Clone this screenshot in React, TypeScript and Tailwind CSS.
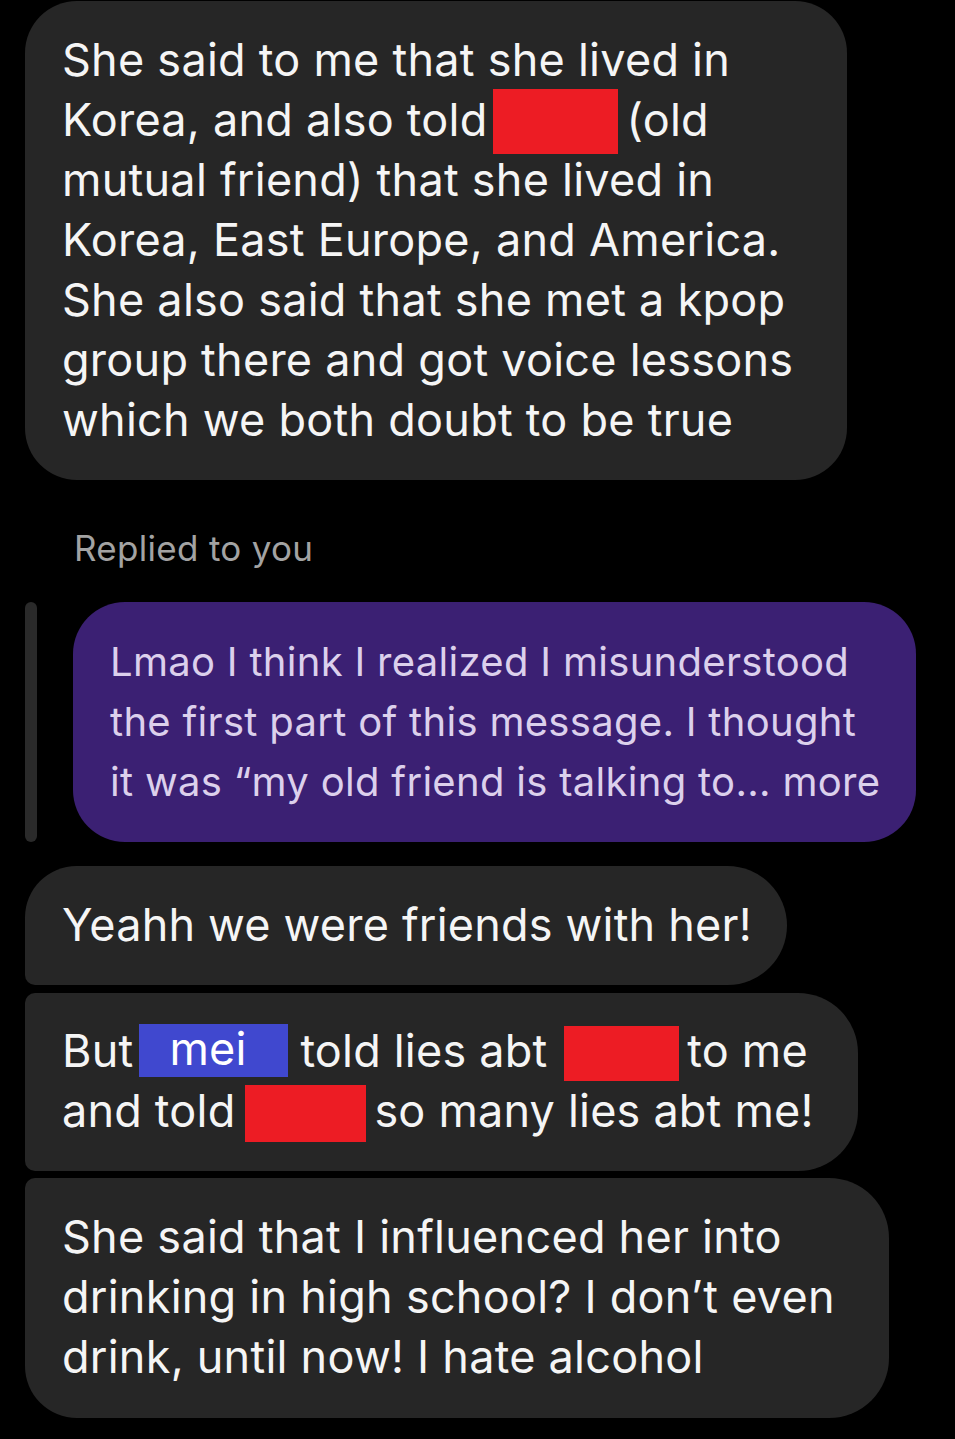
import React from "react";

const font = { fontFamily: "Inter, 'Noto Sans', sans-serif" };

export default function App() {
  return (
    <div
      className="w-[955px] h-[1439px] bg-black overflow-hidden pl-[25px] pt-[1px] text-[#f5f5f5]"
      style={font}
    >
      {/* Bubble 1 */}
      <div className="w-[822px] rounded-[52px] bg-[#262626] pl-[37px] pt-[29px] pb-[30px] text-[45px] leading-[60px] tracking-[0.25px]">
        <div className="h-[60px]">She said to me that she lived in</div>
        <div className="h-[60px] flex items-center whitespace-nowrap">
          <span>Korea, and also told</span>
          <span className="shrink-0 w-[125px] h-[65px] bg-[#ed1c24] ml-[5px] mr-[9px] mt-[2px]" />
          <span>(old</span>
        </div>
        <div className="h-[60px]">mutual friend) that she lived in</div>
        <div className="h-[60px]">Korea, East Europe, and America.</div>
        <div className="h-[60px]">She also said that she met a kpop</div>
        <div className="h-[60px]">group there and got voice lessons</div>
        <div className="h-[60px]">which we both doubt to be true</div>
      </div>

      {/* Replied to you */}
      <div className="pl-[49px] mt-[46px] h-[44px] text-[35px] leading-[44px] text-[#a3a3a3] tracking-[0.3px]">
        Replied to you
      </div>

      {/* Reply row */}
      <div className="flex mt-[32px] h-[240px]">
        <div className="w-[12px] h-full rounded-full bg-[#2a2a2a]" />
        <div className="ml-[36px] w-[843px] h-full rounded-[52px] bg-[#3b2073] pl-[37px] pt-[30px] text-[40px] leading-[60px] text-[#dcd0ec] tracking-[0.3px] whitespace-nowrap">
          <div className="h-[60px]">Lmao I think I realized I misunderstood</div>
          <div className="h-[60px]">the first part of this message. I thought</div>
          <div className="h-[60px]">it was “my old friend is talking to... more</div>
        </div>
      </div>

      {/* Bubble 3 */}
      <div className="mt-[24px] w-[762px] h-[119px] bg-[#262626] rounded-tl-[52px] rounded-bl-[10px] rounded-r-[60px] pl-[37px] pt-[29px] text-[45px] leading-[60px] tracking-[0.2px]">
        Yeahh we were friends with her!
      </div>

      {/* Bubble 4 */}
      <div className="mt-[8px] w-[833px] h-[178px] bg-[#262626] rounded-l-[10px] rounded-r-[60px] pl-[37px] pt-[28px] text-[45px] leading-[60px] tracking-[0.2px]">
        <div className="h-[60px] flex items-center whitespace-nowrap">
          <span>But</span>
          <span className="shrink-0 w-[149px] h-[53px] bg-[#4048cf] ml-[6px] mr-[12px] -mt-[2px] pl-[30px] leading-[50px] text-white">
            mei
          </span>
          <span>told lies abt</span>
          <span className="shrink-0 w-[115px] h-[55px] bg-[#ed1c24] ml-[17px] mr-[8px] mt-[4px]" />
          <span>to me</span>
        </div>
        <div className="h-[60px] flex items-center whitespace-nowrap">
          <span>and told</span>
          <span className="shrink-0 w-[121px] h-[57px] bg-[#ed1c24] ml-[10px] mr-[8px] mt-[4px]" />
          <span>so many lies abt me!</span>
        </div>
      </div>

      {/* Bubble 5 */}
      <div className="mt-[7px] w-[864px] h-[240px] bg-[#262626] rounded-tl-[10px] rounded-bl-[52px] rounded-r-[60px] pl-[37px] pt-[29px] text-[45px] leading-[60px] tracking-[0.25px]">
        <div className="h-[60px]">She said that I influenced her into</div>
        <div className="h-[60px]">drinking in high school? I don’t even</div>
        <div className="h-[60px]">drink, until now! I hate alcohol</div>
      </div>
    </div>
  );
}
